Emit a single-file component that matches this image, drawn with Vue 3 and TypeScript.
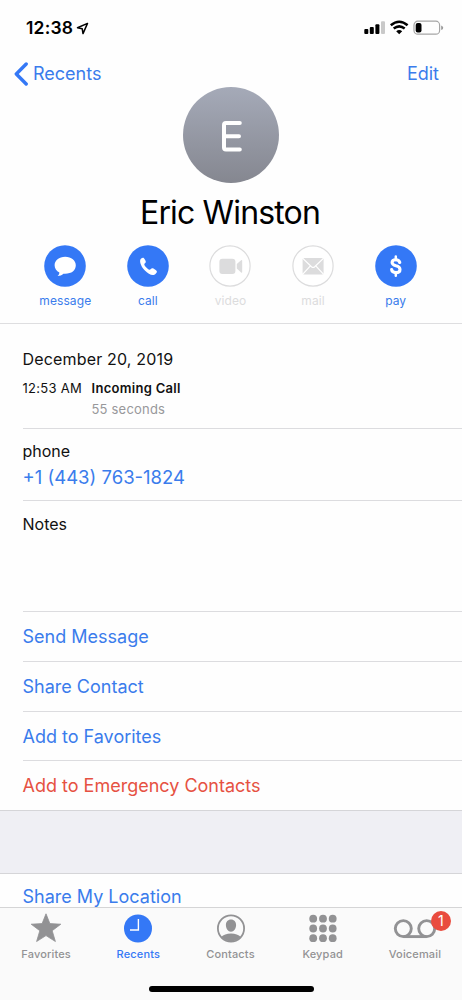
<script setup lang="ts">
interface Action {
  id: string
  label: string
  enabled: boolean
}

interface Tab {
  id: string
  label: string
  badge?: number
}

const actions: Action[] = [
  { id: 'message', label: 'message', enabled: true },
  { id: 'call', label: 'call', enabled: true },
  { id: 'video', label: 'video', enabled: false },
  { id: 'mail', label: 'mail', enabled: false },
  { id: 'pay', label: 'pay', enabled: true },
]

const links = [
  { id: 'send', label: 'Send Message' },
  { id: 'share', label: 'Share Contact' },
  { id: 'favorite', label: 'Add to Favorites' },
  { id: 'emergency', label: 'Add to Emergency Contacts' },
]

const tabs: Tab[] = [
  { id: 'favorites', label: 'Favorites' },
  { id: 'recents', label: 'Recents' },
  { id: 'contacts', label: 'Contacts' },
  { id: 'keypad', label: 'Keypad' },
  { id: 'voicemail', label: 'Voicemail', badge: 1 },
]

const activeTab = 'recents'
const dots = [4.5, 14.3, 24]
</script>

<template>
  <div class="screen">
    <header class="status">
      <div class="clock">
        <span class="time">12:38</span>
        <svg width="13" height="13" viewBox="0 0 13 13">
          <path d="M11.5 1.4 1.5 5.7 6.2 6.7 7 11.6Z" fill="none" stroke="#000" stroke-width="1.5" stroke-linejoin="round" />
        </svg>
      </div>
      <svg class="indicators" width="80" height="16" viewBox="0 0 80 16">
        <rect x="0.3" y="9" width="4" height="5" rx="1" />
        <rect x="5.8" y="7" width="4" height="7" rx="1" />
        <rect x="11.4" y="4.2" width="4" height="9.8" rx="1" />
        <rect x="17" y="1.2" width="4" height="12.8" rx="1" fill="#c9c9c9" />
        <g fill="none" stroke="#000" stroke-width="2.5">
          <path d="M26.8 5.3Q35.2-1.9 43.6 5.3" />
          <path d="M29.7 8.6Q35.2 4.2 40.7 8.6" />
        </g>
        <path d="M32.2 11.2Q35.2 9 38.2 11.2L35.2 14.2Z" />
        <rect x="50" y="1.2" width="25.6" height="13" rx="3.8" fill="none" stroke="#a5a5a5" stroke-width="1.2" />
        <rect x="51.7" y="2.9" width="5.8" height="9.6" rx="2" />
        <path d="M77.2 5.4Q79.2 6 79.2 7.7T77.2 10Z" fill="#999" />
      </svg>
    </header>

    <nav class="navbar">
      <a class="back">
        <svg width="15" height="24" viewBox="0 0 15 24">
          <path d="M12.2 2 2.3 12l9.9 10" fill="none" stroke="#3478f6" stroke-width="3.4" stroke-linecap="round" stroke-linejoin="round" />
        </svg>
        <span class="back-label">Recents</span>
      </a>
      <a class="edit">Edit</a>
    </nav>

    <section class="profile">
      <div class="avatar">
        <svg width="96" height="96" viewBox="0 0 96 96" role="img" aria-label="E">
          <path d="M56.8 36H43Q41 36 41 38V60.6Q41 62.6 43 62.6H56.8M41 49.2H56" fill="none" stroke="#fff" stroke-width="4" stroke-linecap="round" />
        </svg>
      </div>
      <h1 class="name">Eric Winston</h1>
    </section>

    <section class="actions">
      <div v-for="action in actions" :key="action.id" class="action" :class="{ disabled: !action.enabled }">
        <svg width="42" height="42" viewBox="0 0 42 42">
          <circle v-if="action.enabled" cx="21" cy="21" r="20.8" fill="#3478f6" />
          <circle v-else cx="21" cy="21" r="20.1" fill="#fff" stroke="#dcdcdd" stroke-width="1.2" />
          <path v-if="action.id === 'message'" d="M21.2 11.7C15 11.7 10.6 15.4 10.6 20.3C10.6 23.5 12.4 26 15.4 27.6C15.4 29 14.6 30.1 13.6 31C15.8 31 17.9 30 19.4 28.7C26.8 29.4 31.8 25.8 31.8 20.3C31.8 15.4 27.4 11.7 21.2 11.7Z" fill="#fff" />
          <path v-else-if="action.id === 'call'" d="M13.5 14.2C14.2 13.2 15.5 12.3 16.4 12.8C17.2 13.2 19 16.1 18.8 17C18.7 18.1 17.2 18.5 17.3 19.5C17.6 21.1 20.8 24.4 22.4 24.8C23.5 25 24.1 23.4 25.2 23.3C26.3 23.2 29.8 25.4 29.9 26.5C30 27.7 28.5 29.2 27.3 29.7C24.8 30.8 20.9 28.6 17.9 25.5C14.9 22.4 12 17.2 13.5 14.2Z" fill="#fff" />
          <g v-else-if="action.id === 'video'" fill="#dcdcdd">
            <rect x="10.4" y="13.7" width="16" height="15.4" rx="3" />
            <path d="M27.8 19.1 32.1 15.3Q33.2 14.6 33.2 15.8V27Q33.2 28.2 32.1 27.4L27.8 23.6Z" />
          </g>
          <g v-else-if="action.id === 'mail'">
            <rect x="10.6" y="13" width="21" height="16.6" rx="1.6" fill="#dcdcdd" />
            <path d="M10.8 13.4 19.5 21.7Q21.1 23.1 22.7 21.7L31.4 13.4M10.8 29.2 18.2 21.2M31.4 29.2 24 21.2" fill="none" stroke="#fff" stroke-width="1.2" />
          </g>
          <g v-else fill="none" stroke="#fff" stroke-linecap="round">
            <path d="M20.8 11.4V15M20.8 27.6V30.8" stroke-width="2.5" />
            <path d="M24.8 17.5C24.3 15.6 23 14.7 20.9 14.7C18.6 14.7 17.1 15.8 17.1 17.5C17.1 19.4 18.7 20.1 21 20.7C23.6 21.3 25 22.4 25 24.4C25 26.4 23.5 27.6 20.9 27.6C18.4 27.6 16.9 26.5 16.6 24.6" stroke-width="3.1" />
          </g>
        </svg>
        <span class="action-label" :class="`label-${action.id}`">{{ action.label }}</span>
      </div>
    </section>

    <main class="details">
      <section class="row history">
        <div class="date">December 20, 2019</div>
        <div class="entry">
          <span class="entry-time">12:53 AM</span>
          <strong class="entry-kind">Incoming Call</strong>
          <span class="entry-length">55 seconds</span>
        </div>
      </section>
      <section class="row phone">
        <div class="field">phone</div>
        <a class="number">+1 (443) 763-1824</a>
      </section>
      <section class="row notes"><span>Notes</span></section>
      <a v-for="link in links" :key="link.id" class="row link" :class="link.id"><span>{{ link.label }}</span></a>
    </main>

    <div class="gap"></div>
    <div class="location"><span>Share My Location</span></div>

    <footer class="tabbar">
      <div class="tabs">
        <div v-for="tab in tabs" :key="tab.id" class="tab" :class="{ active: tab.id === activeTab }">
          <svg v-if="tab.id === 'favorites'" width="32" height="30" viewBox="0 0 32 30">
            <path d="M16 .8 19.9 10.6 30.8 11.2 22.2 17.7 25.4 28.5 16 22.6 6.6 28.5 9.8 17.7 1.2 11.2 12.1 10.6Z" fill="currentColor" stroke="currentColor" stroke-width=".8" stroke-linejoin="round" />
          </svg>
          <svg v-else-if="tab.id === 'recents'" width="30" height="30" viewBox="0 0 30 30">
            <circle cx="15" cy="15.5" r="14" fill="currentColor" />
            <path d="M15.4 6V17H7" fill="none" stroke="#fff" stroke-width="1.4" />
          </svg>
          <svg v-else-if="tab.id === 'contacts'" width="30" height="30" viewBox="0 0 30 30">
            <circle cx="15" cy="15.5" r="13.1" fill="none" stroke="currentColor" stroke-width="1.8" />
            <path d="M15 6.5C11.8 6.5 9.9 8.8 9.9 12.1C9.9 15.6 12.1 18.8 15 18.8S20.1 15.6 20.1 12.1C20.1 8.8 18.2 6.5 15 6.5ZM5.2 24Q8.4 20.5 15 20.5T24.8 24Q20.7 28.2 15 28.2T5.2 24Z" fill="currentColor" />
          </svg>
          <svg v-else-if="tab.id === 'keypad'" width="28" height="30" viewBox="0 0 28 30">
            <template v-for="y in dots" :key="y">
              <circle v-for="x in dots" :key="x" :cx="x - 0.3" :cy="y + 1.2" r="3.9" fill="currentColor" />
            </template>
          </svg>
          <svg v-else width="44" height="30" viewBox="0 0 44 30">
            <g fill="none" stroke="currentColor" stroke-width="2.9">
              <circle cx="10.3" cy="15.6" r="8" />
              <circle cx="33.7" cy="15.6" r="8" />
              <path d="M10.3 23.6H33.7" />
            </g>
          </svg>
          <span v-if="tab.badge" class="badge">{{ tab.badge }}</span>
          <span class="tab-label">{{ tab.label }}</span>
        </div>
      </div>
      <div class="home"></div>
    </footer>
  </div>
</template>

<style>
body {
  margin: 0;
  background: #fff;
}
</style>

<style scoped>
.screen {
  display: flex;
  flex-direction: column;
  width: 462px;
  height: 1000px;
  overflow: hidden;
  background: #fefefe;
  color: #111;
  font-family: Inter, "Liberation Sans", sans-serif;
  white-space: nowrap;
}
.screen * {
  box-sizing: border-box;
}
svg {
  display: block;
  flex: none;
}
.status {
  display: flex;
  align-items: center;
  justify-content: space-between;
  height: 56px;
  padding: 0 18px 0 26px;
}
.clock {
  display: flex;
  align-items: center;
  gap: 3px;
}
.time {
  font-size: 17.5px;
  font-weight: 600;
  color: #000;
  line-height: 20px;
  letter-spacing: 0.2px;
}
.navbar {
  display: flex;
  align-items: center;
  justify-content: space-between;
  height: 31px;
  padding: 4px 23px 0 14px;
  color: #3a7cec;
  font-size: 18px;
  line-height: 22px;
}
.back {
  display: flex;
  align-items: center;
  gap: 4px;
}
.profile {
  display: flex;
  flex-direction: column;
  align-items: center;
  height: 158px;
}
.avatar {
  width: 96px;
  height: 96px;
  border-radius: 50%;
  background: linear-gradient(#a5aab8, #858790);
}
.name {
  margin: 10px 2px 0 0;
  color: #000;
  font-size: 32px;
  font-weight: 400;
  line-height: 40px;
  letter-spacing: -0.85px;
}
.actions {
  display: flex;
  height: 79px;
  padding: 0 25px 0 24px;
  border-bottom: 1px solid #dedee0;
}
.action {
  display: flex;
  flex: 1;
  flex-direction: column;
  align-items: center;
  color: #3a7cec;
}
.action-label {
  margin-top: 6px;
  font-size: 12px;
  line-height: 15px;
  letter-spacing: 0.1px;
}
.disabled {
  color: #dcdcdd;
}
.details {
  padding-left: 22.5px;
  border-bottom: 1px solid #d5d5d8;
}
.row {
  border-bottom: 1px solid #dcdcdf;
}
.row:last-child {
  border-bottom: 0;
}
.history {
  height: 105px;
  padding-top: 25px;
}
.date {
  font-size: 16px;
  line-height: 20px;
  letter-spacing: 0.17px;
}
.entry {
  display: grid;
  grid-template-columns: 69px auto;
  grid-template-rows: 20px 21px;
  margin-top: 9px;
  font-size: 13px;
  line-height: 20px;
  letter-spacing: 0.3px;
}
.entry-kind {
  font-weight: 600;
}
.entry-length {
  grid-column: 2;
  color: #98989b;
  line-height: 22px;
  letter-spacing: 0.2px;
}
.phone {
  height: 72px;
  padding-top: 12px;
}
.field {
  font-size: 16px;
  line-height: 20px;
}
.number {
  display: block;
  margin-top: 4px;
  color: #3a7cec;
  font-size: 18.5px;
  line-height: 24px;
}
.notes {
  height: 111px;
  padding-top: 13px;
  font-size: 16px;
  line-height: 20px;
}
.link {
  display: flex;
  align-items: center;
  height: 50px;
  color: #3a7cec;
  font-size: 18px;
}
.favorite,
.emergency {
  height: 49px;
}
.favorite {
  padding-top: 1px;
}
.emergency {
  color: #e65142;
}
.gap {
  height: 63px;
  background: #efeff4;
  border-bottom: 1px solid #d5d5d8;
}
.location {
  height: 33px;
  padding: 11px 0 0 22.5px;
  overflow: hidden;
  color: #3a7cec;
  font-size: 18px;
  line-height: 24px;
}
.tabbar {
  flex: 1;
  background: #fafafa;
  border-top: 1px solid #d5d5d6;
}
.tabs {
  display: flex;
  height: 78px;
  padding: 5px 1px 0 0;
}
.tab {
  position: relative;
  display: flex;
  flex: 1;
  flex-direction: column;
  align-items: center;
  color: #929294;
}
.tab.active {
  color: #3478f6;
}
.tab-label {
  margin-top: 4px;
  font-size: 11px;
  font-weight: 500;
  line-height: 14px;
  letter-spacing: 0.15px;
}
.badge {
  position: absolute;
  top: -2px;
  left: 62px;
  width: 20px;
  height: 20px;
  border-radius: 50%;
  background: #e94b3e;
  color: #fff;
  font-size: 14px;
  line-height: 20px;
  text-align: center;
}
.home {
  width: 165px;
  height: 6px;
  margin: 0 auto;
  border-radius: 3px;
  background: #000;
}
</style>
